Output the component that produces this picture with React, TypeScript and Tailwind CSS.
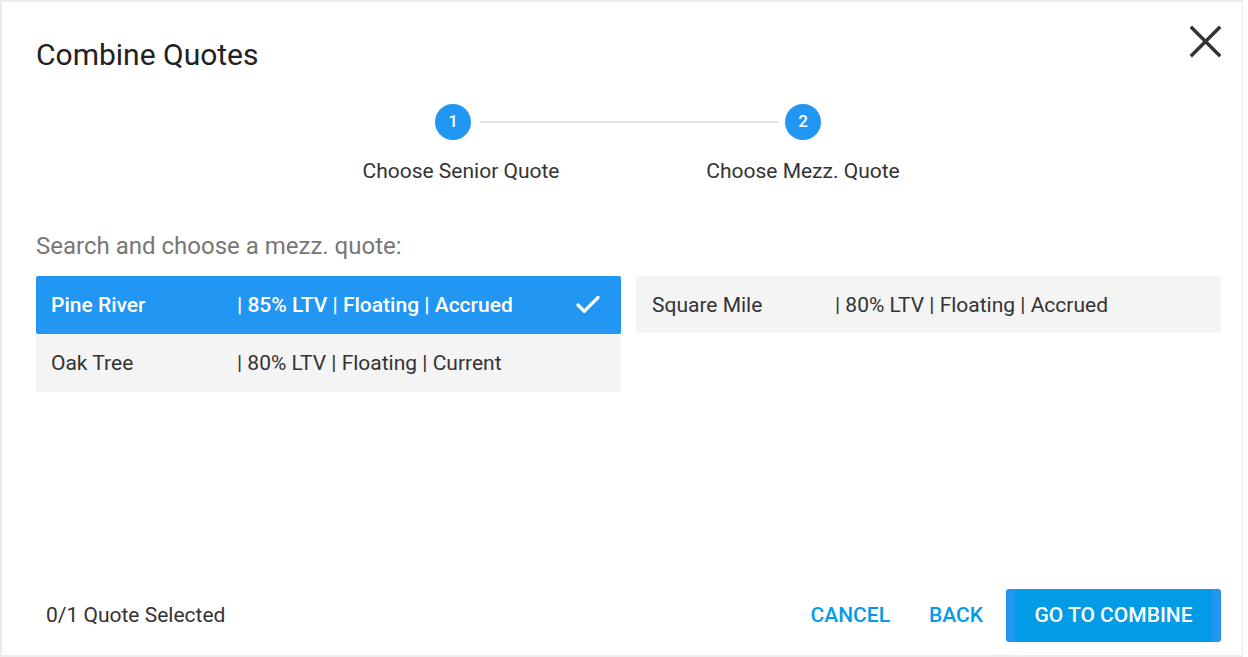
import React from 'react';
import { Check } from 'lucide-react';

type Quote = {
    name: string;
    detail: string;
    selected?: boolean;
};

const leftQuotes: Quote[] = [
    { name: "Pine River", detail: "| 85% LTV | Floating | Accrued", selected: true },
    { name: "Oak Tree", detail: "| 80% LTV | Floating | Current" },
];

const rightQuotes: Quote[] = [
    { name: "Square Mile", detail: "| 80% LTV | Floating | Accrued" },
];

const QuoteRow: React.FC<{ quote: Quote; nameWidth: string; height: string }> = ({ quote, nameWidth, height }) => (
    <div
        className={
            quote.selected
                ? `flex items-center ${height} pl-[15px] pr-[18px] pt-[2px] bg-[#2196f3] rounded-[2px] text-white font-medium`
                : `flex items-center ${height} pl-[15px] pr-[18px] pt-[2px] bg-[#f4f4f4] text-[#333]`
        }
    >
        <span className={`${nameWidth} shrink-0`}>{quote.name}</span>
        <span className="flex-1">{quote.detail}</span>
        {quote.selected && <Check className="w-[30px] h-[30px] text-white -mt-[2px]" strokeWidth={2.6} />}
    </div>
);

const App: React.FC = () => {
    return (
        <div className="w-[1248px] h-[657px] bg-white font-['Roboto','Liberation_Sans',sans-serif] text-[21px]">
            <div className="relative w-[1243px] h-[657px] border-l-2 border-t-2 border-b-2 border-r border-[#ececec] pl-[34px] pr-[21px] flex flex-col">
                {/* close */}
                <button className="absolute top-[23px] right-[20px] w-[33px] h-[33px] flex items-center justify-center">
                    <svg width="33" height="33" viewBox="0 0 33 33">
                        <path d="M3 3 L30 30 M30 3 L3 30" stroke="#333" strokeWidth="3.4" strokeLinecap="square" fill="none" />
                    </svg>
                </button>

                <h1 className="mt-[35px] text-[30px] leading-[36px] font-normal text-[#222]">Combine Quotes</h1>

                {/* stepper */}
                <div className="mt-[31px] flex items-center">
                    <div className="ml-[399px] w-[36px] h-[36px] rounded-full bg-[#2196f3] text-white text-[17px] font-medium flex items-center justify-center">1</div>
                    <div className="ml-[9px] w-[298px] h-[2px] bg-[#e4e4e4]" />
                    <div className="ml-[7px] w-[36px] h-[36px] rounded-full bg-[#2196f3] text-white text-[17px] font-medium flex items-center justify-center">2</div>
                </div>
                <div className="mt-[19px] flex text-[#333] leading-[25px]">
                    <div className="ml-[305px] w-[240px] text-center">Choose Senior Quote</div>
                    <div className="ml-[102px] w-[240px] text-center">Choose Mezz. Quote</div>
                </div>

                <div className="mt-[48px] text-[24px] leading-[28px] text-[#777]">Search and choose a mezz. quote:</div>

                {/* quotes */}
                <div className="mt-[16px] grid grid-cols-2 gap-x-[15px] items-start">
                    <div className="flex flex-col">
                        <QuoteRow quote={leftQuotes[0]} nameWidth="w-[186px]" height="h-[58px]" />
                        <QuoteRow quote={leftQuotes[1]} nameWidth="w-[186px]" height="h-[58px]" />
                    </div>
                    <div className="flex flex-col">
                        {rightQuotes.map((q) => (
                            <div key={q.name} className="flex items-center h-[57px] pl-[16px] pt-[2px] bg-[#f4f4f4] text-[#333]">
                                <span className="w-[183px] shrink-0">{q.name}</span>
                                <span>{q.detail}</span>
                            </div>
                        ))}
                    </div>
                </div>

                {/* footer */}
                <div className="mt-auto mb-[13px] flex items-center">
                    <span className="ml-[10px] text-[#333]">0/1 Quote Selected</span>
                    <div className="ml-auto flex items-center">
                        <button className="text-[#039be5] font-medium leading-[25px]">CANCEL</button>
                        <button className="ml-[39px] text-[#039be5] font-medium leading-[25px]">BACK</button>
                        <button className="ml-[23px] h-[53px] w-[215px] rounded-[3px] bg-[#039be5] border-x-[9px] border-[#2196f3] text-white font-medium flex items-center justify-center">
                            GO TO COMBINE
                        </button>
                    </div>
                </div>
            </div>
        </div>
    );
};

export default App;
